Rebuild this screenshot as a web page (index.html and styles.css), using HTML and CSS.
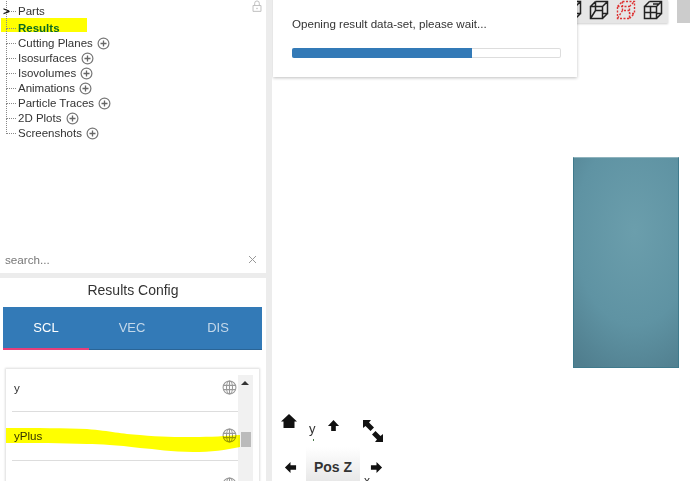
FILE: index.html
```html
<!DOCTYPE html>
<html lang="en">
<head>
    <meta charset="UTF-8">
    <meta name="viewport" content="width=device-width, initial-scale=1.0">
    <title>Results Config</title>
    <link rel="stylesheet" href="styles.css">
</head>
<body>
    <svg width="0" height="0" class="defs">
        <symbol id="plus" viewBox="0 0 13 13">
            <circle cx="6.5" cy="6.5" r="5.4" fill="none" stroke="#777" stroke-width="1.2"/>
            <path d="M6.5 3.5v6M3.5 6.5h6" stroke="#666" stroke-width="1.3"/>
        </symbol>
        <symbol id="globe" viewBox="0 0 14 14">
            <g fill="none" stroke="#999" stroke-width="1">
                <circle cx="7" cy="7" r="6"/>
                <ellipse cx="7" cy="7" rx="2.8" ry="6"/>
                <path d="M7 1v12M1.2 5h11.6M1.2 9h11.6"/>
            </g>
        </symbol>
        <symbol id="cube" viewBox="0 0 20 20">
            <g fill="none" stroke="#222" stroke-width="1.5">
                <path d="M1.5 6.5h12v12h-12zM6.500 1.500h12v12h-5M1.500 6.500l5-5M13.500 6.500l5-5M13.500 18.500l5-5M6.500 1.500v9h7M6.500 10.500l-5 8"/>
            </g>
        </symbol>
    </svg>

    <div class="layout">
        <div class="sidebar">
            <div class="tree-panel">
                <svg class="lock" viewBox="0 0 10 13"><path d="M2.500 6V3.500a2.500 2.500 0 0 1 5 0V6M.7 6h8.600v6.300H.7z" fill="none" stroke="#bbb" stroke-width="1"/><rect x="4.300" y="8.500" width="1.400" height="1.400" fill="#bbb"/></svg>
                <ul class="tree">
                    <li class="parts"><span class="caret">&gt;</span>Parts</li>
                    <li class="active"><span class="marker"></span>Results</li>
                    <li>Cutting Planes <svg class="plus"><use href="#plus"/></svg></li>
                    <li>Isosurfaces <svg class="plus"><use href="#plus"/></svg></li>
                    <li>Isovolumes <svg class="plus"><use href="#plus"/></svg></li>
                    <li>Animations <svg class="plus"><use href="#plus"/></svg></li>
                    <li>Particle Traces <svg class="plus"><use href="#plus"/></svg></li>
                    <li>2D Plots <svg class="plus"><use href="#plus"/></svg></li>
                    <li>Screenshots <svg class="plus"><use href="#plus"/></svg></li>
                </ul>
                <div class="search">
                    <span>search...</span>
                    <svg class="clear" viewBox="0 0 9 9"><path d="M1 1l7 7M8 1l-7 7" stroke="#999" stroke-width="1" fill="none"/></svg>
                </div>
            </div>
            <div class="config-panel">
                <div class="config-title">Results Config</div>
                <div class="tabs">
                    <div class="tab selected">SCL</div>
                    <div class="tab">VEC</div>
                    <div class="tab">DIS</div>
                </div>
                <div class="list-box">
                    <div class="list-rows">
                        <div class="row"><span>y</span><svg class="globe"><use href="#globe"/></svg></div>
                        <div class="row"><span>yPlus</span><svg class="globe"><use href="#globe"/></svg></div>
                        <div class="row"><span>Velocity [m/s]</span><svg class="globe"><use href="#globe"/></svg></div>
                    </div>
                    <div class="scrollbar">
                        <span class="arrow"></span>
                        <span class="thumb"></span>
                    </div>
                    <!-- hand drawn highlight across the yPlus row -->
                    <svg class="scribble" viewBox="0 0 240 100"><path d="M0 59C30 59 60 59 81 60C105 62 115 65 134 66C155 68 170 68 187 68C205 68 220 67 234 66V78C220 81 205 83 187 83C165 83 150 80 134 79C110 76 95 75 81 75C55 74 30 74 0 74Z" fill="#ff0"/></svg>
                </div>
            </div>
        </div>

        <div class="viewport">
            <div class="toolbar">
                <svg class="cube"><use href="#cube"/></svg>
                <svg class="cube"><use href="#cube"/></svg>
                <svg class="cube" viewBox="0 0 20 20"><g fill="none" stroke="#d33" stroke-width="1.400" stroke-dasharray="2 1.500"><path d="M1.500 6.500h12v12h-12zM6.500 1.500h12v12h-5M1.500 6.500l5-5M13.500 6.500l5-5M13.500 18.500l5-5M6.500 1.500v9h7M6.500 10.500l-5 8"/></g></svg>
                <svg class="cube" viewBox="0 0 20 20"><g fill="none" stroke="#222" stroke-width="1.500"><path d="M1.500 6.500h12v12h-12zM6.500 1.500h12v12h-5M1.500 6.500l5-5M13.500 6.500l5-5M13.500 18.500l5-5M7.500 6.500v12M1.500 12.500h12M10 4h6"/></g></svg>
            </div>
            <div class="toolbar-end"></div>
            <div class="progress-card">
                <p>Opening result data-set, please wait...</p>
                <div class="progress"><div class="progress-bar" style="width: 67%"></div></div>
            </div>
            <div class="model"></div>

            <svg class="nav-icon home" viewBox="0 0 16 16"><path d="M8 1L0 8.500h2.500V15h11V8.500H16z" fill="#111"/></svg>
            <span class="axis-y">y</span>
            <span class="axis-dot"></span>
            <svg class="nav-icon up" viewBox="0 0 14 14"><path d="M7 1L1 7.500h3.500V13h5V7.500H13z" fill="#111"/></svg>
            <svg class="nav-icon arrow-nw" viewBox="0 0 11 11"><path d="M0 0h8L6 2.500l5 5L7.500 11l-5-5L0 8z" fill="#111"/></svg>
            <svg class="nav-icon arrow-se" viewBox="0 0 11 11"><path d="M11 11H3l2-2.500-5-5L3.500 0l5 5L11 3z" fill="#111"/></svg>
            <svg class="nav-icon left" viewBox="0 0 14 14"><path d="M1 7l6-6v3.500h6v5H7V13z" fill="#111"/></svg>
            <div class="pos-label">Pos Z</div>
            <svg class="nav-icon right" viewBox="0 0 14 14"><path d="M13 7L7 1v3.500H1v5h6V13z" fill="#111"/></svg>
            <span class="axis-x">x</span>
        </div>
    </div>
</body>
</html>
```

FILE: styles.css
```css
/* Global styles */
html, body {
    margin: 0;
    padding: 0;
    height: 100%;
    overflow: hidden;
}

body {
    font-family: 'Liberation Sans', Arial, sans-serif;
    background-color: #fff;
    color: #333;
}

.defs {
    position: absolute;
}

.layout {
    display: flex;
    height: 481px;
}

/* Sidebar */
.sidebar {
    width: 266px;
    flex: none;
    display: flex;
    flex-direction: column;
    gap: 5px;
    background-color: #ececec;
    border-right: 6px solid #ececec;
}

.tree-panel {
    position: relative;
    z-index: 0;
    height: 273px;
    flex: none;
    background-color: #fff;
}

.lock {
    position: absolute;
    top: 0;
    left: 252px;
    width: 10px;
    height: 12px;
}

.tree {
    list-style: none;
    margin: 0;
    padding: 4px 0 0 18px;
    height: 236px;
    font-size: 11.500px;
    box-sizing: border-box;
}

.tree li {
    position: relative;
    height: 15px;
    line-height: 15px;
    white-space: nowrap;
}

/* dotted tree guides */
.tree li::before {
    content: "";
    position: absolute;
    left: -12px;
    top: 7px;
    width: 10px;
    border-top: 1px dotted #888;
}

.tree li::after {
    content: "";
    position: absolute;
    left: -12px;
    top: -7px;
    height: 15px;
    border-left: 1px dotted #888;
}

.caret {
    position: absolute;
    left: -15px;
    top: 0;
    font-weight: bold;
    color: #111;
    z-index: 1;
}

.active {
    color: #0b6a22;
    font-weight: bold;
    margin-top: 2px;
}

.marker {
    position: absolute;
    left: -17px;
    top: -3px;
    width: 86px;
    height: 14px;
    background-color: #ff0;
    z-index: -1;
}

.plus {
    width: 13px;
    height: 13px;
    vertical-align: -3px;
    margin-left: 1px;
}

.search {
    display: flex;
    justify-content: space-between;
    align-items: center;
    padding: 0 9px 0 5px;
    height: 26px;
    margin-top: 10px;
    font-size: 11.700px;
    color: #777;
}

.clear {
    width: 9px;
    height: 9px;
}

/* Results config */
.config-panel {
    flex: 1;
    min-height: 0;
    overflow: hidden;
    background-color: #fff;
}

.config-title {
    text-align: center;
    font-size: 14px;
    line-height: 22px;
    margin-top: 1px;
}

.tabs {
    display: flex;
    height: 43px;
    margin: 6px 4px 0 3px;
    background-color: #337ab7;
    color: #c4d8ea;
    font-size: 13px;
    box-sizing: border-box;
    border-bottom: 1px solid #2a6496;
}

.tab {
    width: 86px;
    line-height: 42px;
    text-align: center;
    box-sizing: border-box;
}

.tab.selected {
    color: #fff;
    border-bottom: 2px solid #e83e7a;
    height: 43px;
}

.list-box {
    position: relative;
    display: flex;
    margin: 19px 7px 0 6px;
    padding: 6px 6px 0 6px;
    height: 200px;
    background-color: #fff;
    box-shadow: 0 0 2px 1px #ddd;
}

.list-rows {
    flex: 1;
    min-width: 0;
}

.row {
    display: flex;
    justify-content: space-between;
    align-items: center;
    height: 46px;
    padding: 0 1px 2px 2px;
    border-bottom: 1px solid #ddd;
    font-size: 11.600px;
}

.row:first-child {
    height: 25px;
    padding-bottom: 11px;
}

.row:last-child {
    border-bottom: none;
}

.globe {
    width: 15px;
    height: 15px;
}

.scribble {
    position: absolute;
    left: 0;
    top: 0;
    width: 240px;
    height: 100px;
    mix-blend-mode: multiply;
}

.scrollbar {
    position: relative;
    width: 15px;
    flex: none;
    background-color: #f1f1f1;
}

.arrow {
    position: absolute;
    left: 3px;
    top: 6px;
    border-left: 4px solid transparent;
    border-right: 4px solid transparent;
    border-bottom: 4px solid #333;
}

.thumb {
    position: absolute;
    left: 3px;
    top: 57px;
    width: 10px;
    height: 15px;
    background-color: #bbb;
}

/* Viewport */
.viewport {
    position: relative;
    flex: 1;
    overflow: hidden;
    background-color: #fff;
}

.progress-card {
    position: absolute;
    left: 1px;
    top: -10px;
    width: 304px;
    height: 87px;
    padding: 27px 19px 0;
    box-sizing: border-box;
    background-color: #fff;
    box-shadow: 0 1px 3px rgba(0, 0, 0, 0.25);
}

.progress-card p {
    margin: 0 0 17px;
    font-size: 11.600px;
    line-height: 14px;
}

.progress {
    width: 269px;
    height: 10px;
    background-color: #fff;
    box-shadow: inset 0 0 0 1px #ddd;
    border-radius: 2px;
    overflow: hidden;
}

.progress-bar {
    height: 100%;
    background-color: #337ab7;
}

.toolbar {
    position: absolute;
    left: 290px;
    top: 0;
    width: 106px;
    height: 23px;
    display: flex;
    gap: 7px;
    justify-content: flex-end;
    padding-right: 5px;
    box-sizing: border-box;
    background-color: #e6e6e6;
    box-shadow: 0 1px 2px rgba(0, 0, 0, 0.2);
}

.toolbar-end {
    position: absolute;
    left: 405px;
    top: 0;
    width: 13px;
    height: 23px;
    background-color: #ccc;
}

.cube {
    width: 20px;
    height: 20px;
    flex: none;
}

.model {
    position: absolute;
    left: 301px;
    top: 157px;
    width: 106px;
    height: 211px;
    box-sizing: border-box;
    border: 1px solid #3f7a8c;
    border-top-color: #8fb3bd;
    background: radial-gradient(ellipse 95% 75% at 58% 35%, #6b9eac 0%, #5f93a3 60%, #507e8e 100%);
}

/* Camera controls */
.nav-icon {
    position: absolute;
}

.home {
    left: 9px;
    top: 413px;
    width: 16px;
    height: 16px;
}

.up {
    left: 55px;
    top: 419px;
    width: 13px;
    height: 13px;
}

.arrow-nw {
    left: 91px;
    top: 420px;
    width: 11px;
    height: 11px;
}

.arrow-se {
    left: 100px;
    top: 431px;
    width: 11px;
    height: 11px;
}

.left {
    left: 12px;
    top: 461px;
    width: 13px;
    height: 13px;
}

.right {
    left: 98px;
    top: 461px;
    width: 13px;
    height: 13px;
}

.pos-label {
    position: absolute;
    left: 34px;
    top: 447px;
    width: 54px;
    height: 34px;
    padding-top: 12px;
    box-sizing: border-box;
    text-align: center;
    font-size: 14px;
    font-weight: bold;
    color: #333;
    background: linear-gradient(to bottom, #fff, #e8e8e8);
}

.axis-y,
.axis-x {
    position: absolute;
    color: #333;
}

.axis-y {
    left: 37px;
    top: 421px;
    font-size: 13px;
}

.axis-x {
    left: 92px;
    top: 474px;
    font-size: 12px;
}

.axis-dot {
    position: absolute;
    left: 41px;
    top: 439px;
    width: 1px;
    height: 2px;
    background-color: #4a7a4a;
}
```
